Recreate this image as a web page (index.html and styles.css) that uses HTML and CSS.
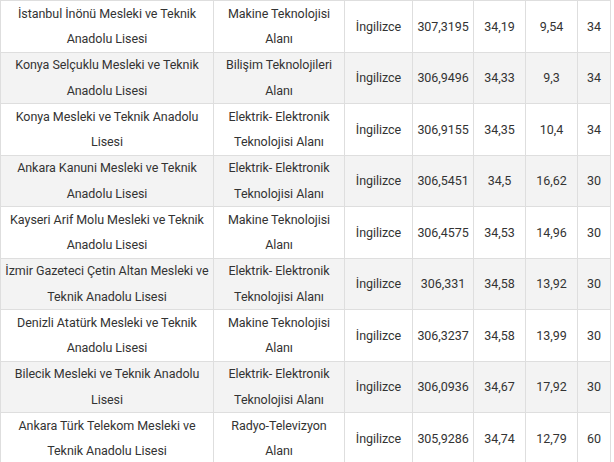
FILE: index.html
```html
<!DOCTYPE html>
<html lang="tr">
<head>
<meta charset="utf-8">
<link rel="stylesheet" href="styles.css">
</head>
<body>
<div class="table">
  <div class="cell">İstanbul İnönü Mesleki ve Teknik Anadolu Lisesi</div>
  <div class="cell">Makine Teknolojisi Alanı</div>
  <div class="cell">İngilizce</div>
  <div class="cell">307,3195</div>
  <div class="cell">34,19</div>
  <div class="cell">9,54</div>
  <div class="cell">34</div>

  <div class="cell alt">Konya Selçuklu Mesleki ve Teknik Anadolu Lisesi</div>
  <div class="cell alt">Bilişim Teknolojileri Alanı</div>
  <div class="cell alt">İngilizce</div>
  <div class="cell alt">306,9496</div>
  <div class="cell alt">34,33</div>
  <div class="cell alt">9,3</div>
  <div class="cell alt">34</div>

  <div class="cell">Konya Mesleki ve Teknik Anadolu Lisesi</div>
  <div class="cell">Elektrik- Elektronik Teknolojisi Alanı</div>
  <div class="cell">İngilizce</div>
  <div class="cell">306,9155</div>
  <div class="cell">34,35</div>
  <div class="cell">10,4</div>
  <div class="cell">34</div>

  <div class="cell alt">Ankara Kanuni Mesleki ve Teknik Anadolu Lisesi</div>
  <div class="cell alt">Elektrik- Elektronik Teknolojisi Alanı</div>
  <div class="cell alt">İngilizce</div>
  <div class="cell alt">306,5451</div>
  <div class="cell alt">34,5</div>
  <div class="cell alt">16,62</div>
  <div class="cell alt">30</div>

  <div class="cell">Kayseri Arif Molu Mesleki ve Teknik Anadolu Lisesi</div>
  <div class="cell">Makine Teknolojisi Alanı</div>
  <div class="cell">İngilizce</div>
  <div class="cell">306,4575</div>
  <div class="cell">34,53</div>
  <div class="cell">14,96</div>
  <div class="cell">30</div>

  <div class="cell alt">İzmir Gazeteci Çetin Altan Mesleki ve Teknik Anadolu Lisesi</div>
  <div class="cell alt">Elektrik- Elektronik Teknolojisi Alanı</div>
  <div class="cell alt">İngilizce</div>
  <div class="cell alt">306,331</div>
  <div class="cell alt">34,58</div>
  <div class="cell alt">13,92</div>
  <div class="cell alt">30</div>

  <div class="cell">Denizli Atatürk Mesleki ve Teknik Anadolu Lisesi</div>
  <div class="cell">Makine Teknolojisi Alanı</div>
  <div class="cell">İngilizce</div>
  <div class="cell">306,3237</div>
  <div class="cell">34,58</div>
  <div class="cell">13,99</div>
  <div class="cell">30</div>

  <div class="cell alt">Bilecik Mesleki ve Teknik Anadolu Lisesi</div>
  <div class="cell alt">Elektrik- Elektronik Teknolojisi Alanı</div>
  <div class="cell alt">İngilizce</div>
  <div class="cell alt">306,0936</div>
  <div class="cell alt">34,67</div>
  <div class="cell alt">17,92</div>
  <div class="cell alt">30</div>

  <div class="cell">Ankara Türk Telekom Mesleki ve Teknik Anadolu Lisesi</div>
  <div class="cell">Radyo-Televizyon Alanı</div>
  <div class="cell">İngilizce</div>
  <div class="cell">305,9286</div>
  <div class="cell">34,74</div>
  <div class="cell">12,79</div>
  <div class="cell">60</div>
</div>
</body>
</html>
```

FILE: styles.css
```css
html, body {
  margin: 0;
  padding: 0;
  background: #ffffff;
}

.table {
  display: grid;
  grid-template-columns: 213px 131px 68px 61px 52px 52px 33px;
  grid-auto-rows: 51.5px;
  width: max-content;
  border-top: 1px solid #dedede;
  border-left: 1px solid #dedede;
  font-family: Roboto, "Noto Sans", sans-serif;
  font-size: 12.5px;
  letter-spacing: -0.05px;
  line-height: 25.5px;
  color: #333333;
}

.cell {
  box-sizing: border-box;
  border-right: 1px solid #dedede;
  border-bottom: 1px solid #dedede;
  display: flex;
  align-items: center;
  justify-content: center;
  text-align: center;
  padding: 0 2px;
  background: #ffffff;
}

.cell.alt {
  background: #f3f3f3;
}
```
